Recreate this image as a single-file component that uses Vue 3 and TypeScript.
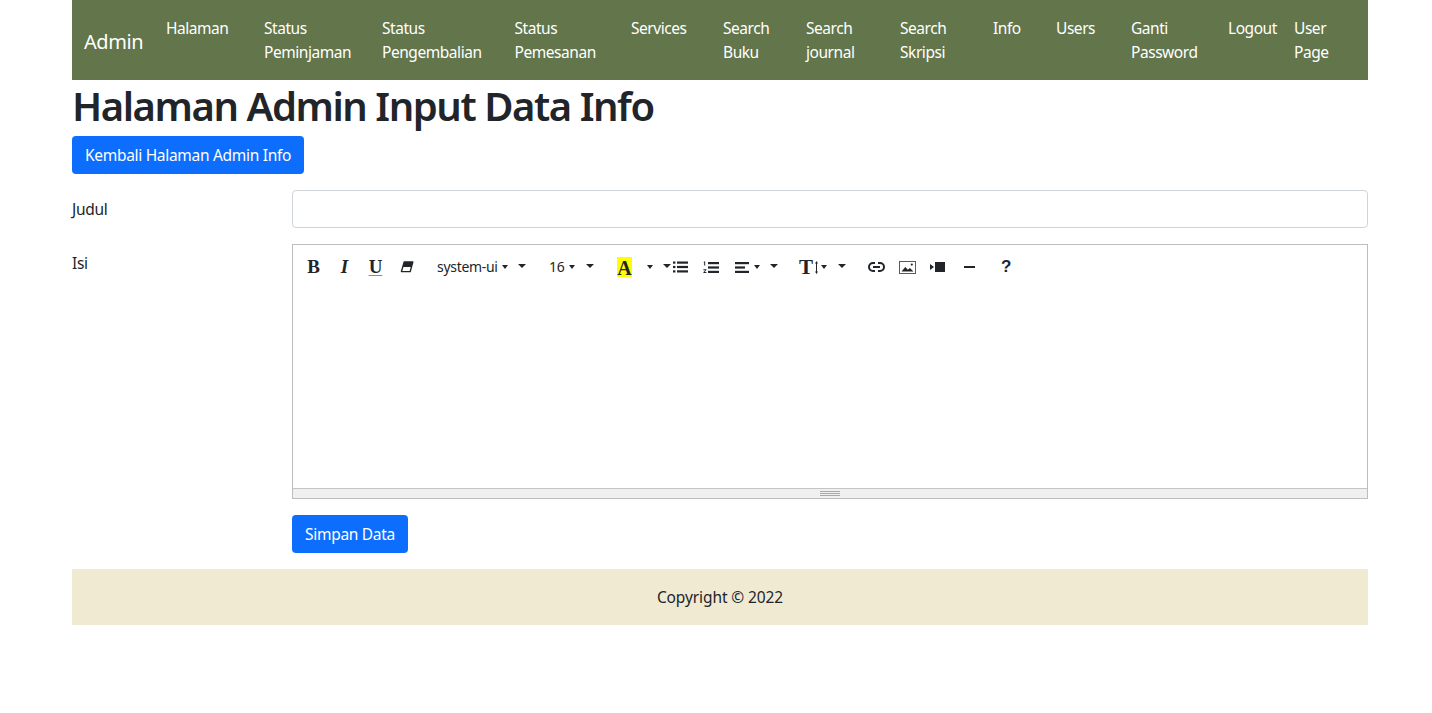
<template>
  <div class="page">
    <nav class="navbar">
      <a class="brand">Admin</a>
      <ul class="nav-list">
        <li v-for="item in navItems" :key="item"><a class="nav-link">{{ item }}</a></li>
      </ul>
    </nav>

    <h1 class="title">Halaman Admin Input Data Info</h1>
    <a class="btn back">Kembali Halaman Admin Info</a>

    <form class="form" @submit.prevent>
      <div class="row">
        <label class="label">Judul</label>
        <input class="input" type="text" />
      </div>
      <div class="row">
        <label class="label">Isi</label>
        <div class="editor">
          <div class="toolbar">
            <span class="tool serif bold">B</span>
            <span class="tool serif italic">I</span>
            <span class="tool serif bold underline">U</span>
            <span class="tool">
              <svg width="14" height="12" viewBox="0 0 14 12"><path d="M4.2 1h8.6L10.2 10.6H1.4z" fill="none" stroke="#212529" stroke-width="1.4" stroke-linejoin="round"/><path d="M4.2 1h8.6L11.5 6H2.9z" fill="#212529"/></svg>
            </span>

            <span class="drop-text font-name">system-ui</span>
            <i class="caret small after-name"></i>
            <i class="caret big after-small"></i>

            <span class="drop-text font-size">16</span>
            <i class="caret small after-size"></i>
            <i class="caret big after-small-2"></i>

            <span class="color-a">A</span>
            <i class="caret small after-a"></i>
            <i class="caret big after-small-3"></i>

            <span class="icon ul">
              <svg width="15" height="12" viewBox="0 0 15 12" fill="#212529"><rect x="0" y="0.5" width="2.4" height="2.2"/><rect x="0" y="4.9" width="2.4" height="2.2"/><rect x="0" y="9.3" width="2.4" height="2.2"/><rect x="4" y="0.5" width="11" height="2.2"/><rect x="4" y="4.9" width="11" height="2.2"/><rect x="4" y="9.3" width="11" height="2.2"/></svg>
            </span>
            <span class="icon ol">
              <svg width="16" height="13" viewBox="0 0 16 13" fill="#212529"><path d="M1.2 0.6h1v4h-1v-3H.4z"/><path d="M.4 8.2h3v.8L1.6 11h1.8v1h-3v-.8L2.2 9.2H.4z"/><rect x="5" y="1" width="11" height="2.2"/><rect x="5" y="5.4" width="11" height="2.2"/><rect x="5" y="9.8" width="11" height="2.2"/></svg>
            </span>
            <span class="icon align">
              <svg width="14" height="11" viewBox="0 0 14 11" fill="#212529"><rect x="0" y="0" width="14" height="2.2"/><rect x="0" y="4.4" width="10" height="2.2"/><rect x="0" y="8.8" width="14" height="2.2"/></svg>
            </span>
            <i class="caret small after-align"></i>
            <i class="caret big after-small-4"></i>

            <span class="height-t">T</span>
            <span class="icon arrow">
              <svg width="3" height="13" viewBox="0 0 3 13" fill="#212529"><path d="M1.5 0l1.5 2.4H2v8.2h1L1.5 13 0 10.6h1V2.4H0z"/></svg>
            </span>
            <i class="caret small after-arrow"></i>
            <i class="caret big after-small-5"></i>

            <span class="icon link">
              <svg width="17" height="10" viewBox="0 0 17 10" fill="none" stroke="#212529" stroke-width="2"><path d="M7 1H5a4 4 0 0 0 0 8h2M10 1h2a4 4 0 0 1 0 8h-2M5 5h7"/></svg>
            </span>
            <span class="icon picture">
              <svg width="17" height="13" viewBox="0 0 17 13"><rect x=".5" y=".5" width="16" height="12" fill="none" stroke="#212529" stroke-opacity=".75"/><path d="M2.5 10.5l3.8-4.6 2.6 2.8 2-1.6 3.6 3.4z" fill="#212529"/><circle cx="12.8" cy="3.6" r="1.1" fill="#212529"/></svg>
            </span>
            <span class="icon video">
              <svg width="15" height="10" viewBox="0 0 15 10" fill="#212529"><rect x="5" y="0" width="10" height="10"/><path d="M0 2l4 3-4 3z"/></svg>
            </span>
            <span class="icon hr-icon"><i class="hr-bar"></i></span>
            <span class="help">?</span>
          </div>
          <div class="editing"></div>
          <div class="statusbar">
            <span class="grip"><i></i><i></i><i></i></span>
          </div>
        </div>
      </div>
      <div class="row">
        <span class="label"></span>
        <button class="btn save" type="submit">Simpan Data</button>
      </div>
    </form>

    <footer class="footer">Copyright © 2022</footer>
  </div>
</template>

<script setup lang="ts">
const navItems: string[] = [
  "Halaman",
  "Status Peminjaman",
  "Status Pengembalian",
  "Status Pemesanan",
  "Services",
  "Search Buku",
  "Search journal",
  "Search Skripsi",
  "Info",
  "Users",
  "Ganti Password",
  "Logout",
  "User Page",
];
</script>

<style>
body {
  background: #fff;
}
</style>

<style scoped>
.page {
  width: 1296px;
  margin-left: 72px;
  font-family: "Noto Sans", "Open Sans", sans-serif;
  font-size: 15.5px;
  line-height: 24px;
  letter-spacing: -0.3px;
  color: #212529;
}

.navbar {
  display: flex;
  align-items: center;
  height: 80px;
  padding: 0 12px;
  box-sizing: border-box;
  background: #62754b;
  color: #fff;
}

.brand {
  width: 74px;
  flex: none;
  margin-top: 4px;
  font-size: 20px;
  line-height: 30px;
  letter-spacing: -0.45px;
}

.nav-list {
  display: grid;
  grid-template-columns: 98px 118px 132.5px 116.5px 92px 83px 94px 93px 63px 75px 97px 66px 66px;
  margin: 0;
  padding: 0;
  list-style: none;
  letter-spacing: -0.45px;
}

.nav-link {
  display: block;
  padding: 8px;
}

.title {
  margin: 0 0 8px;
  padding-top: 2px;
  height: 46px;
  font-size: 40px;
  line-height: 48px;
  font-weight: 600;
  letter-spacing: -1.45px;
}

.btn {
  display: inline-block;
  box-sizing: border-box;
  height: 38px;
  padding: 7px 13px;
  border: 0;
  border-radius: 4px;
  background: #0d6efd;
  color: #fff;
  font: inherit;
  letter-spacing: inherit;
}

.back {
  width: 232px;
  white-space: nowrap;
}

.save {
  width: 116px;
  white-space: nowrap;
}

.form {
  margin-top: 16px;
}

.row {
  display: flex;
  margin-bottom: 16px;
}

.label {
  flex: none;
  width: 220px;
  padding-top: 7px;
}

.input {
  flex: 1;
  height: 38px;
  box-sizing: border-box;
  border: 1px solid #ced4da;
  border-radius: 4px;
  background: #fff;
}

.editor {
  flex: 1;
  height: 255px;
  box-sizing: border-box;
  border: 1px solid #bdbdbd;
  display: flex;
  flex-direction: column;
}

.toolbar {
  display: flex;
  align-items: center;
  height: 44px;
  padding-left: 5px;
  flex: none;
}

.editing {
  flex: 1;
}

.statusbar {
  flex: none;
  height: 10px;
  box-sizing: border-box;
  border-top: 1px solid #c4c4c4;
  background: #f0f0f0;
  display: flex;
  justify-content: center;
  align-items: center;
}

.grip {
  display: flex;
  flex-direction: column;
  gap: 1px;
  width: 20px;
}

.grip i {
  display: block;
  height: 1px;
  background: #a9a9a9;
}

.tool {
  width: 31px;
  display: flex;
  justify-content: center;
  align-items: center;
  font-size: 19px;
  letter-spacing: 0;
}

.serif {
  font-family: "Liberation Serif", serif;
}

.bold {
  font-weight: 700;
}

.italic {
  font-style: italic;
  font-weight: 700;
}

.underline {
  text-decoration: underline;
  text-decoration-thickness: 1px;
  text-decoration-color: #8a8d90;
  text-underline-offset: 2px;
}

.drop-text {
  flex: none;
  white-space: nowrap;
  font-size: 14px;
  letter-spacing: -0.3px;
}

.font-name {
  width: 60px;
  margin-left: 15px;
}

.font-size {
  width: 16px;
  margin-left: 23px;
}

.caret {
  flex: none;
  display: block;
  width: 0;
  height: 0;
  border-style: solid;
  border-color: #212529 transparent transparent;
}

.caret.small {
  border-width: 4px 3px 0;
}

.caret.big {
  border-width: 4px 4px 0;
  margin-top: -3px;
}

.after-name {
  margin-left: 5px;
}

.after-small {
  margin-left: 10px;
}

.after-size {
  margin-left: 4px;
}

.after-small-2 {
  margin-left: 11px;
}

.color-a {
  width: 15px;
  height: 20px;
  margin-left: 23px;
  background: #ff0;
  text-align: center;
  font: 700 20px/22px "Liberation Serif", serif;
  letter-spacing: 0;
}

.after-a {
  margin-left: 15px;
}

.after-small-3 {
  margin-left: 10px;
}

.icon {
  flex: none;
  display: flex;
  align-items: center;
}

.ul {
  margin-left: 2px;
}

.ol {
  margin-left: 15px;
}

.align {
  margin-left: 16px;
}

.after-align {
  margin-left: 5px;
}

.after-small-4 {
  margin-left: 10px;
}

.height-t {
  width: 15px;
  margin-left: 21px;
  font: 700 21px/24px "Liberation Serif", serif;
  letter-spacing: 0;
}

.arrow {
  margin-left: 1px;
}

.after-arrow {
  margin-left: 3px;
}

.after-small-5 {
  margin-left: 11px;
}

.link {
  margin-left: 22px;
}

.picture {
  margin-left: 14px;
}

.video {
  margin-left: 14px;
}

.hr-icon {
  margin-left: 19px;
}

.hr-bar {
  display: block;
  width: 11px;
  height: 2px;
  background: #212529;
}

.help {
  margin-left: 26px;
  font: 700 17px/24px "Liberation Sans", sans-serif;
  letter-spacing: 0;
}

.footer {
  height: 56px;
  background: #f0ead2;
  display: flex;
  justify-content: center;
  align-items: center;
  letter-spacing: -0.1px;
}
</style>
